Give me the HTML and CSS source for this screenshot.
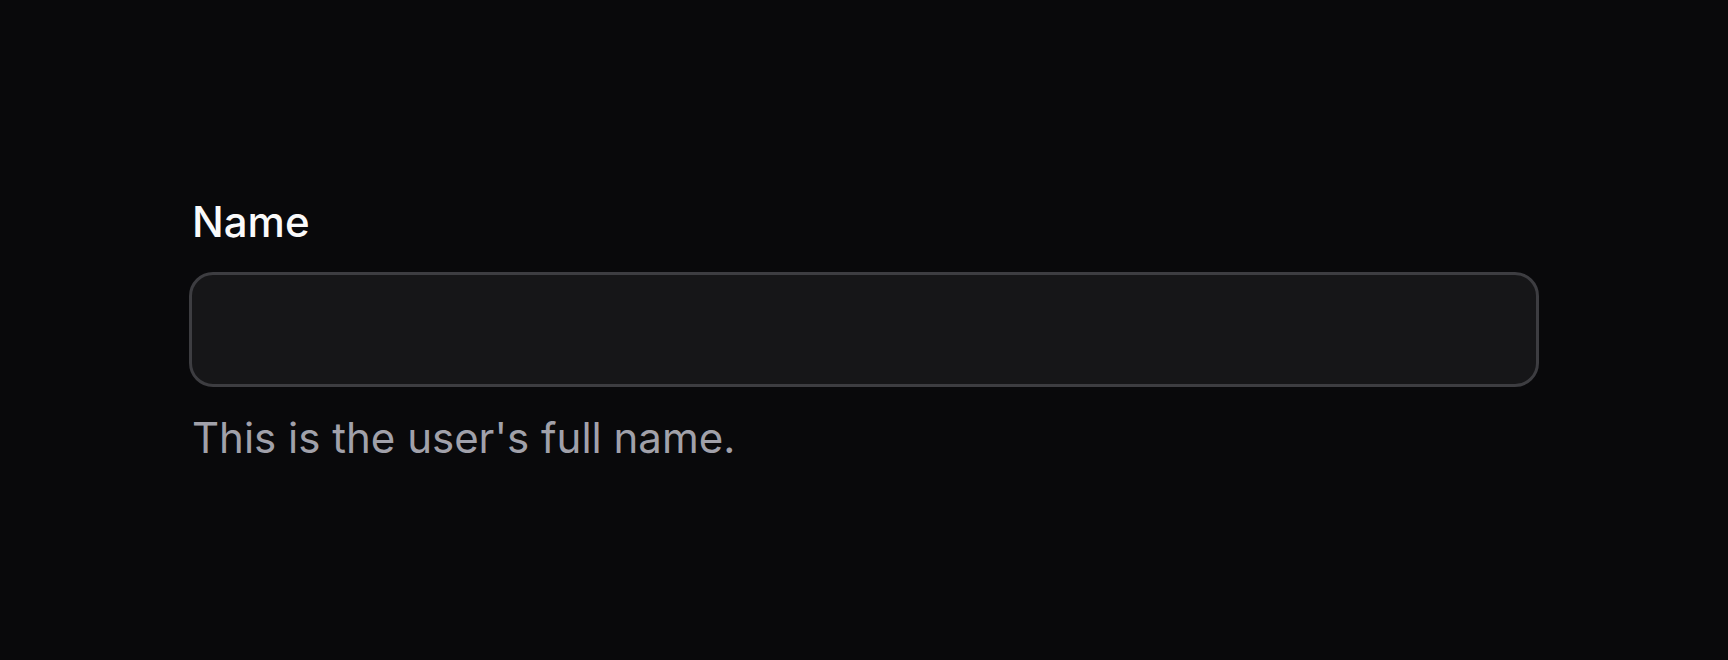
FILE: index.html
```html
<!DOCTYPE html>
<html>
<head>
<meta charset="utf-8">
<link rel="stylesheet" href="styles.css">
</head>
<body>
<main class="page">
  <div class="field">
    <label class="label" for="name">Name</label>
    <input class="input" id="name" type="text">
    <p class="description">This is the user's full name.</p>
  </div>
</main>
</body>
</html>
```
FILE: styles.css
```css
html, body {
  margin: 0;
  padding: 0;
  background: #09090b;
  height: 100%;
}
body {
  font-family: Inter, "Noto Sans", sans-serif;
}
.page {
  padding: 201px 0 0 189px;
}
.field {
  width: 1350px;
  display: flex;
  flex-direction: column;
}
.label {
  color: #fafafa;
  font-size: 42px;
  font-weight: 500;
  line-height: 42px;
  padding-left: 3px;
}
.input {
  margin-top: 29px;
  box-sizing: border-box;
  height: 115px;
  width: 100%;
  background: #161618;
  border: 3px solid #3d3d41;
  border-radius: 24px;
  outline: none;
  font-family: inherit;
}
.description {
  margin: 30px 0 0 0;
  padding-left: 3px;
  color: #a1a1aa;
  font-size: 42px;
  line-height: 42px;
}
```
